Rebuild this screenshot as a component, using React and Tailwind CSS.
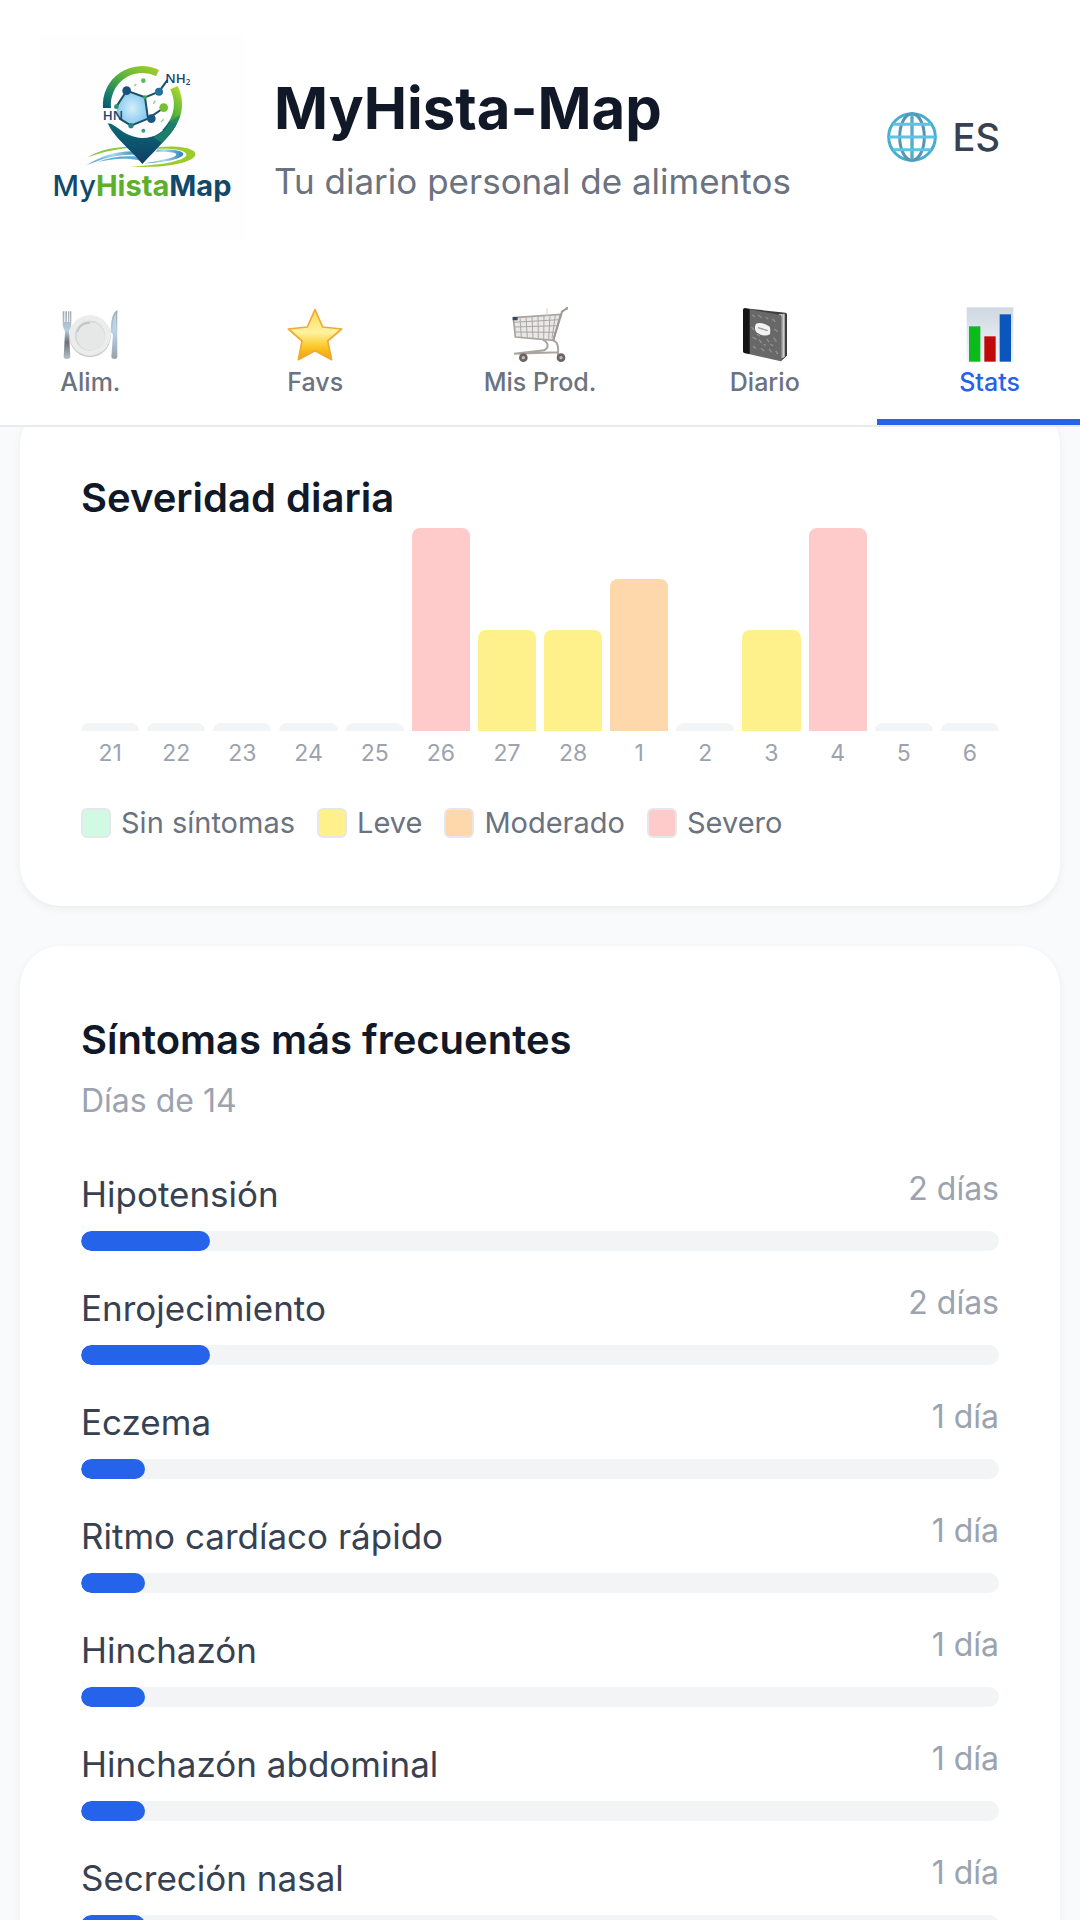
import React, { useState } from "react";
import clsx from "clsx";

const severityMap = {
  none: { height: 4, bar: "bg-[#f3f4f6]" },
  mild: { height: 50, bar: "bg-[#fef08a]" },
  moderate: { height: 75, bar: "bg-[#fed7aa]" },
  severe: { height: 100, bar: "bg-[#fecaca]" },
};

const days = [
  { day: 21, severity: "none" },
  { day: 22, severity: "none" },
  { day: 23, severity: "none" },
  { day: 24, severity: "none" },
  { day: 25, severity: "none" },
  { day: 26, severity: "severe" },
  { day: 27, severity: "mild" },
  { day: 28, severity: "mild" },
  { day: 1, severity: "moderate" },
  { day: 2, severity: "none" },
  { day: 3, severity: "mild" },
  { day: 4, severity: "severe" },
  { day: 5, severity: "none" },
  { day: 6, severity: "none" },
];

const legend = [
  { label: "Sin síntomas", color: "bg-[#d1fae5]" },
  { label: "Leve", color: "bg-[#fef08a]" },
  { label: "Moderado", color: "bg-[#fed7aa]" },
  { label: "Severo", color: "bg-[#fecaca]" },
];

const TOTAL_DAYS = 14;

const symptoms = [
  { name: "Hipotensión", count: 2 },
  { name: "Enrojecimiento", count: 2 },
  { name: "Eczema", count: 1 },
  { name: "Ritmo cardíaco rápido", count: 1 },
  { name: "Hinchazón", count: 1 },
  { name: "Hinchazón abdominal", count: 1 },
  { name: "Secreción nasal", count: 1 },
];

const Logo = () => (
  <svg viewBox="33 -15 612 612" className="size-[204px] shrink-0" role="img" aria-label="MyHistaMap">
    <defs>
      <linearGradient id="ringLeft" x1="0.8" y1="0" x2="0.1" y2="1">
        <stop offset="0" stopColor="#9ccb2c" />
        <stop offset="0.4" stopColor="#57b23c" />
        <stop offset="0.8" stopColor="#157a6c" />
        <stop offset="1" stopColor="#0d5a70" />
      </linearGradient>
      <linearGradient id="ringRight" x1="0.6" y1="0" x2="0.2" y2="1">
        <stop offset="0" stopColor="#a6d52b" />
        <stop offset="0.5" stopColor="#5bb53a" />
        <stop offset="1" stopColor="#0f6b6e" />
      </linearGradient>
      <linearGradient id="pinTip" x1="0" y1="0" x2="0" y2="1">
        <stop offset="0" stopColor="#0f6a78" />
        <stop offset="1" stopColor="#0b3f66" />
      </linearGradient>
      <linearGradient id="wave" x1="0" y1="0" x2="1" y2="0">
        <stop offset="0" stopColor="#3f94c4" />
        <stop offset="0.5" stopColor="#a9d8ee" />
        <stop offset="1" stopColor="#2680b8" />
      </linearGradient>
      <radialGradient id="ringFill">
        <stop offset="0" stopColor="#d5effc" />
        <stop offset="1" stopColor="#86c8ee" />
      </radialGradient>
    </defs>
    <rect x="33" y="-15" width="612" height="612" fill="#fefefe" />

    {/* water */}
    <path d="M175 352C215 328 270 318 330 320C265 326 220 335 175 352Z" fill="#8cc63f" />
    <path d="M172 376C220 346 265 332 320 334L330 344C270 342 220 356 172 376Z" fill="url(#wave)" />
    <path d="M205 366C245 350 285 346 330 350L335 362C290 352 250 356 205 366Z" fill="#5eaad2" />
    <path d="M385 322C450 314 505 326 499 345C492 370 400 386 300 379C380 378 468 364 472 345C474 330 430 325 385 326Z" fill="#9ccb2c" />
    <path d="M385 328C440 328 468 334 462 345C454 358 405 368 345 370C385 362 440 354 442 344C442 336 410 334 380 336Z" fill="url(#wave)" />

    {/* pin */}
    <path d="M390 90A117 117 0 0 0 222 204L246 204A95 95 0 0 1 381 108Z" fill="url(#ringLeft)" />
    <path d="M424 148L446 138C472 192 456 240 430 272L400 270C432 238 446 196 424 148Z" fill="url(#ringRight)" />
    <path d="M236 250C262 250 282 292 340 294C380 293 405 275 420 245L444 250C430 282 395 314 340 372C302 326 254 292 236 250Z" fill="url(#pinTip)" />
    <path d="M422 245C412 270 396 282 372 291L398 308C425 285 446 254 454 224Z" fill="#218666" opacity="0.8" />

    {/* molecule */}
    <path d="M293 152L348 172L357 236L306 257L262 228L264 195Z" fill="url(#ringFill)" />
    <path
      d="M262 200L293 152L348 172L357 236L306 257L272 236M348 172L390 155L414 122M357 236L404 204"
      fill="none"
      stroke="#1d4f66"
      strokeWidth="6"
      strokeLinecap="round"
    />
    <circle cx="293" cy="152" r="13" fill="#1c4e7c" />
    <circle cx="390" cy="155" r="12" fill="#22729f" />
    <circle cx="367" cy="236" r="13" fill="#1c5580" />
    <circle cx="404" cy="203" r="13" fill="#74bf35" />
    <circle cx="306" cy="257" r="8" fill="#28818a" />
    <circle cx="262" cy="200" r="7" fill="#2c9160" />
    <circle cx="348" cy="172" r="6" fill="#3da35a" />
    <circle cx="343" cy="122" r="7" fill="#5fbb62" />
    <circle cx="343" cy="272" r="6" fill="#35a07c" />
    <path d="M373 192l6 -10M396 246l8 -8M316 138l6 -6" stroke="#8ccf95" strokeWidth="4" />
    <g fill="#17476a" fontFamily="Open Sans, sans-serif" fontWeight="600" fontSize="40">
      <text x="221" y="241">HN</text>
      <text x="409" y="130">
        NH<tspan fontSize="24" dy="5">2</tspan>
      </text>
    </g>

    <text
      x="339"
      y="467"
      textAnchor="middle"
      fontFamily="Inter, sans-serif"
      fontSize="87"
      fontWeight="700"
      fill="#12496b"
    >
      <tspan fontWeight="500">My</tspan>
      <tspan fill="#5cb02c">Hista</tspan>
      <tspan>Map</tspan>
    </text>
  </svg>
);

const GlobeIcon = () => (
  <svg viewBox="0 0 150 150" className="size-[50px]" fill="none" aria-hidden="true">
    <circle cx="75" cy="75" r="70" stroke="#46aecf" strokeWidth="9" />
    <ellipse cx="75" cy="75" rx="37" ry="70" stroke="#5596b4" strokeWidth="9" />
    <path d="M75 5V145" stroke="#57abc8" strokeWidth="10" />
    <path d="M18 37H132M5 75H145M18 113H132" stroke="#5bc4e4" strokeWidth="9" />
  </svg>
);

const PlateIcon = () => (
  <svg viewBox="0 0 168 168" className="size-14" aria-hidden="true">
    <defs>
      <linearGradient id="silver" x1="0" y1="0" x2="0" y2="1">
        <stop offset="0" stopColor="#a5a8ad" />
        <stop offset="0.4" stopColor="#b7cde0" />
        <stop offset="0.65" stopColor="#6c7075" />
        <stop offset="1" stopColor="#b4c4d0" />
      </linearGradient>
      <linearGradient id="blade" x1="0" y1="0" x2="0" y2="1">
        <stop offset="0" stopColor="#9aa5ae" />
        <stop offset="0.45" stopColor="#b9d2e6" />
        <stop offset="1" stopColor="#95a1ab" />
      </linearGradient>
    </defs>
    <circle cx="84" cy="88" r="62" fill="#c9cacb" />
    <circle cx="84" cy="85" r="61" fill="#ececec" />
    <circle cx="84" cy="86" r="45" fill="#d3d5d6" />
    <circle cx="86" cy="88" r="42" fill="#e6e8e8" />
    <path d="M46 74C52 56 68 48 84 48" stroke="#bfc1c2" strokeWidth="4" fill="none" />
    <path
      d="M2 13H7V45H10V13H15V45H18V13H22V45H24V13H28V52C28 64 21 68 21 76L25 150Q24 156 15 156Q5 156 5 150L9 76C9 68 2 64 2 52Z"
      fill="url(#silver)"
    />
    <path d="M166 9C152 16 146 42 146 76L153 82L148 150Q149 156 158 156Q166 156 166 150Z" fill="url(#blade)" />
    <path d="M162 18C154 30 152 50 152 74H162Z" fill="#bdd3e6" />
  </svg>
);

const StarIcon = () => (
  <svg viewBox="0 0 168 168" className="size-14" aria-hidden="true">
    <defs>
      <linearGradient id="gold" x1="0" y1="0" x2="0" y2="1">
        <stop offset="0" stopColor="#fdda4f" />
        <stop offset="0.45" stopColor="#fff3a0" />
        <stop offset="0.75" stopColor="#fbc725" />
        <stop offset="1" stopColor="#f39c0f" />
      </linearGradient>
    </defs>
    <path
      d="M84 8L107 60L164 66L122 102L134 158L84 131L34 158L45 102L4 66L61 60Z"
      fill="url(#gold)"
      stroke="#efa935"
      strokeWidth="5"
      strokeLinejoin="round"
    />
  </svg>
);

const CartIcon = () => (
  <svg viewBox="0 0 168 168" className="size-14" fill="none" aria-hidden="true">
    <path d="M4 32L146 22L124 100L10 90Z" fill="#e9e8e7" stroke="#a7a3a0" strokeWidth="5" />
    <path
      d="M5 46L142 38M7 60L138 56M8 75L132 76M24 31L28 92M42 30L46 93M60 29L63 95M78 28L79 96M96 27L95 98M114 26L110 99M130 25L120 94"
      stroke="#aaa7a4"
      strokeWidth="3"
    />
    <path d="M166 3L150 14L124 100" stroke="#9f9892" strokeWidth="6" strokeLinecap="round" strokeLinejoin="round" />
    <path d="M105 4V28" stroke="#d2cfcc" strokeWidth="3" />
    <path d="M92 98C110 106 112 122 96 130L6 140M124 100C140 106 139 124 138 145M6 140L140 136" stroke="#aaa5a2" strokeWidth="6" />
    <circle cx="34" cy="152" r="13" fill="#6d6563" />
    <circle cx="34" cy="152" r="5" fill="#c3bdbb" />
    <circle cx="147" cy="152" r="13" fill="#6d6563" />
    <circle cx="147" cy="152" r="5" fill="#c3bdbb" />
    <rect x="2" y="30" width="15" height="10" rx="2" fill="#34485e" />
    <circle cx="164" cy="5" r="4" fill="#a9a39f" />
  </svg>
);

const NotebookIcon = () => (
  <svg viewBox="0 0 168 168" className="size-14" aria-hidden="true">
    <path d="M24 4L146 17Q150 18 150 23V146L132 162Z" fill="#3d3d3d" />
    <path d="M125 22L143 20V150L130 156Z" fill="#d5d5d5" />
    <path d="M131 22V156M137 21V152" stroke="#8b8b8b" strokeWidth="2" />
    <path d="M24 4L130 24Q134 25 134 30V158Q134 164 128 162L22 138Q18 137 18 132V10Q18 3 24 4Z" fill="#686868" />
    <path d="M24 4L38 7V141L22 138Q18 137 18 132V10Q18 3 24 4Z" fill="#151515" />
    <path
      d="M46 24l8 6M64 24l10 8M86 30l8 6M106 36l9 8M44 60l7 9M46 90l12 7M66 98l8 10M88 96l9 9M110 92l8 12M48 118l9 6M72 124l10 8M96 126l8 10M116 132l7 9M112 66l10 8M60 82l8 6M100 112l9 4M80 112l7 3"
      stroke="#8f8f8f"
      strokeWidth="4"
    />
    <path d="M57 50Q76 44 95 57Q102 60 99 82Q80 92 58 76Q50 64 57 50Z" fill="#f3f3f3" />
    <path d="M63 62L92 71" stroke="#9a9a9a" strokeWidth="4" />
  </svg>
);

const StatsIcon = () => (
  <svg viewBox="0 0 168 168" className="size-14" aria-hidden="true">
    <defs>
      <linearGradient id="statsPanel" x1="0" y1="0" x2="0" y2="1">
        <stop offset="0" stopColor="#cfd9e2" />
        <stop offset="1" stopColor="#eff4fa" />
      </linearGradient>
    </defs>
    <rect x="14" y="1" width="140" height="163" fill="url(#statsPanel)" />
    <rect x="21" y="58" width="34" height="106" fill="#0bbb1c" />
    <rect x="67" y="88" width="34" height="76" fill="#c00a0a" />
    <rect x="113" y="22" width="34" height="142" fill="#0a56bd" />
  </svg>
);

const tabs = [
  { id: "foods", label: "Alim.", Icon: PlateIcon },
  { id: "favs", label: "Favs", Icon: StarIcon },
  { id: "products", label: "Mis Prod.", Icon: CartIcon },
  { id: "diary", label: "Diario", Icon: NotebookIcon },
  { id: "stats", label: "Stats", Icon: StatsIcon },
];

export default function App() {
  const [activeTab, setActiveTab] = useState("stats");

  return (
    <div className="flex h-screen flex-col overflow-hidden bg-[#f8fafc] font-['Inter',sans-serif] text-[#111827]">
      <header className="shrink-0 overflow-hidden border-b-2 border-[#e8eaee] bg-white">
        <div className="flex items-center gap-[30px] pt-[35px] pr-20 pl-10">
          <Logo />
          <div className="min-w-0 flex-1">
            <h1 className="text-[58px] leading-[80px] font-bold">MyHista-Map</h1>
            <p className="mt-2 text-[35px] leading-[50px] text-[#6b7280]">Tu diario personal de alimentos</p>
          </div>
          <button type="button" className="flex items-center gap-4 text-[38px] leading-[50px] font-medium text-[#374151]">
            <GlobeIcon />
            ES
          </button>
        </div>

        {/* Tabs run a little past both edges of the screen */}
        <nav className="-mx-[22px] mt-9 flex">
          {tabs.map(({ id, label, Icon }) => (
            <button
              key={id}
              type="button"
              onClick={() => setActiveTab(id)}
              aria-current={activeTab === id ? "page" : undefined}
              className={clsx(
                "flex flex-1 basis-0 flex-col items-center border-b-6 pt-8 pb-[22px]",
                activeTab === id ? "border-[#2563eb] text-[#2563eb]" : "border-transparent text-[#6b7280]"
              )}
            >
              <Icon />
              <span className="mt-1 text-[25px] leading-[30px] font-medium">{label}</span>
            </button>
          ))}
        </nav>
      </header>

      <main className="min-h-0 flex-1 overflow-hidden px-5">
        {/* Daily severity */}
        <section className="-mt-[23px] rounded-[41px] bg-white px-[61px] pt-16 pb-[62px] shadow-[0_3px_8px_rgba(0,0,0,0.06)]">
          <h2 className="text-[40px] leading-[60px] font-semibold">Severidad diaria</h2>

          <div className="flex gap-2">
            {days.map(({ day, severity }) => (
              <div key={day} className="flex-1 basis-0">
                <div className="flex h-[203px] items-end">
                  <div
                    className={clsx("w-full rounded-t-lg", severityMap[severity].bar)}
                    style={{ height: `${severityMap[severity].height}%` }}
                  />
                </div>
                <div className="mt-2.5 text-center text-[23px] leading-[24px] text-[#9ca3af]">{day}</div>
              </div>
            ))}
          </div>

          <ul className="mt-[37px] flex flex-wrap gap-x-[22px] text-[29px] leading-[42px] text-[#6b7280]">
            {legend.map((item) => (
              <li key={item.label} className="flex items-center gap-2.5">
                <span className={clsx("size-[30px] rounded-md border-2 border-[#e5e7eb]", item.color)} />
                {item.label}
              </li>
            ))}
          </ul>
        </section>

        {/* Most frequent symptoms */}
        <section className="mt-10 rounded-[41px] bg-white px-[61px] pt-16 pb-[62px] shadow-[0_3px_8px_rgba(0,0,0,0.06)]">
          <h2 className="text-[40px] leading-[60px] font-semibold">Síntomas más frecuentes</h2>
          <p className="mt-[9px] text-[32px] leading-[44px] text-[#9ca3af]">Días de {TOTAL_DAYS}</p>

          <ul className="mt-11 flex flex-col gap-[30px]">
            {symptoms.map((s) => (
              <li key={s.name}>
                <div className="flex items-start justify-between">
                  <span className="text-[35px] leading-[54px] text-[#374151]">{s.name}</span>
                  <span className="text-[32px] leading-[44px] text-[#9ca3af]">
                    {s.count} {s.count === 1 ? "día" : "días"}
                  </span>
                </div>
                <div className="mt-2.5 h-5 overflow-hidden rounded-full bg-[#f3f4f6]">
                  <div
                    className="h-full rounded-full bg-[#2563eb]"
                    style={{ width: `${Math.round((s.count / TOTAL_DAYS) * 100)}%` }}
                  />
                </div>
              </li>
            ))}
          </ul>
        </section>
      </main>
    </div>
  );
}
